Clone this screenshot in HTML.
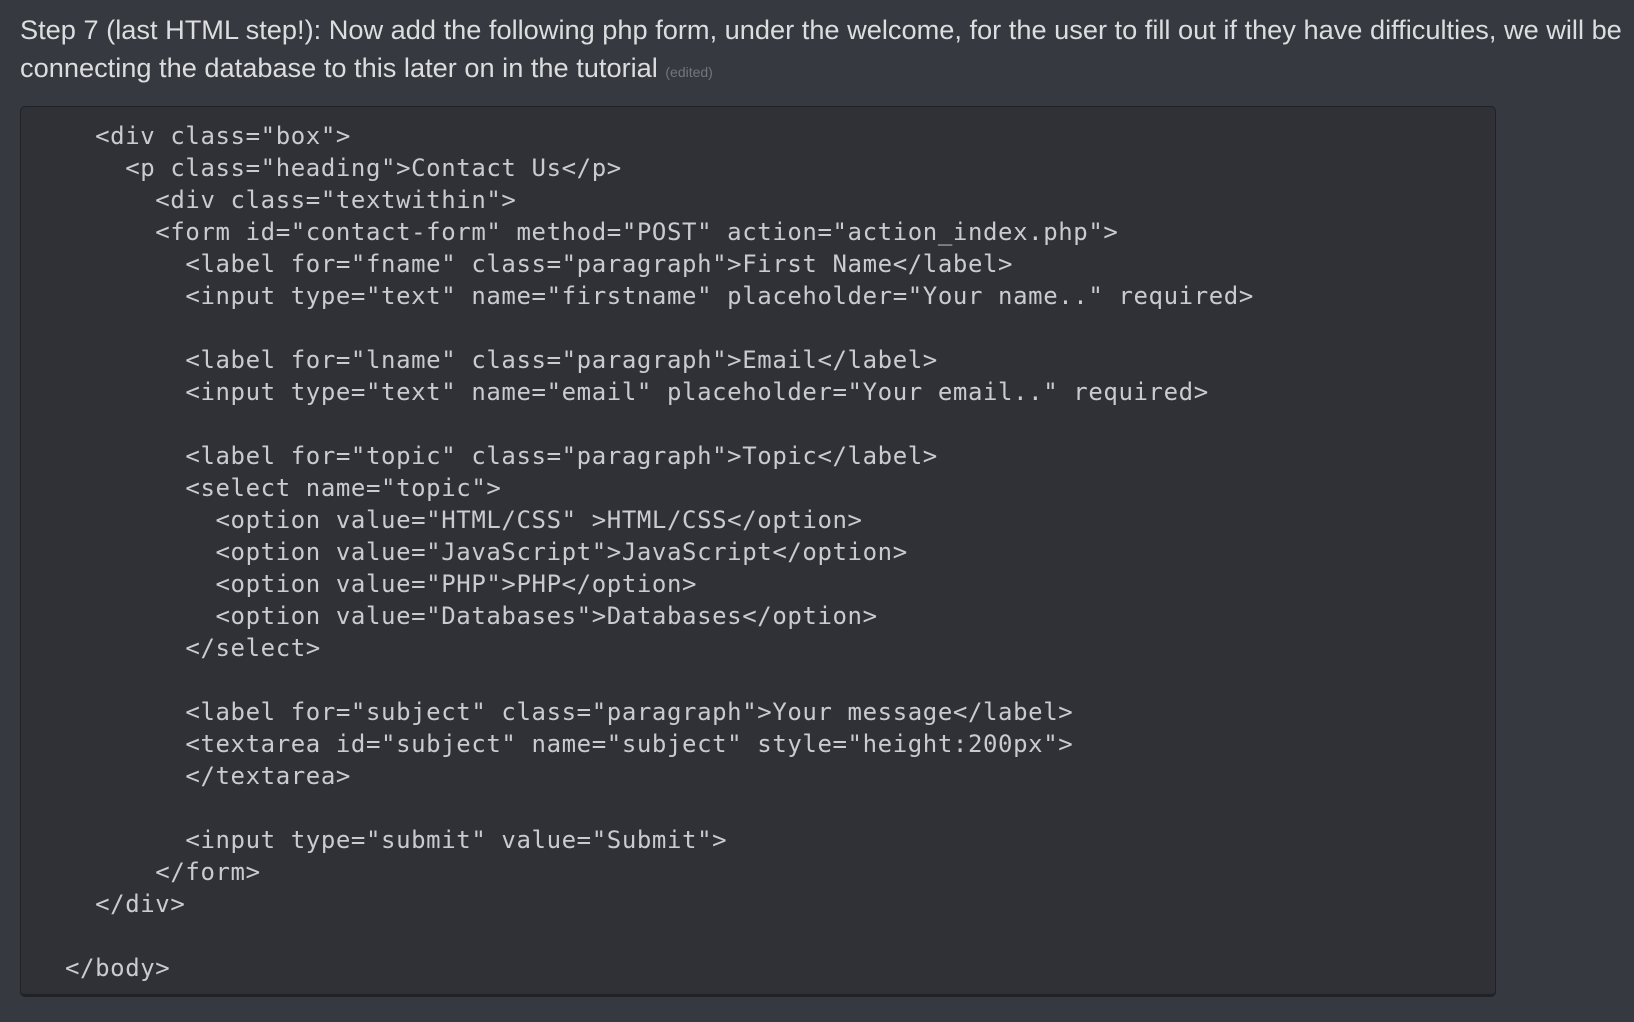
<!DOCTYPE html>
<html><head><meta charset="utf-8"><style>
html,body{margin:0;padding:0;background:#36393f;width:1634px;height:1022px;overflow:hidden}
.t{position:absolute;left:20px;color:#dcddde;font-family:"Liberation Sans",sans-serif;font-size:27.2px;white-space:nowrap}
.e{font-size:14px;color:#72767d}
.box{position:absolute;left:20px;top:106px;width:1476px;height:891px;background:#2f3136;border:1px solid #202225;border-bottom-width:3px;border-radius:5px;box-sizing:border-box}
pre{position:absolute;left:65px;top:120px;margin:0;font-family:"DejaVu Sans Mono","Liberation Mono",monospace;font-size:24px;line-height:32.02px;color:#c9cbce;letter-spacing:0.6px}
</style></head><body>
<div class="t" style="top:14px">Step 7 (last HTML step!): Now add the following php form, under the welcome, for the user to fill out if they have difficulties, we will be</div>
<div class="t" style="top:52px">connecting the database to this later on in the tutorial <span class="e">(edited)</span></div>
<div class="box"></div>
<pre>  &lt;div class="box"&gt;
    &lt;p class="heading"&gt;Contact Us&lt;/p&gt;
      &lt;div class="textwithin"&gt;
      &lt;form id="contact-form" method="POST" action="action_index.php"&gt;
        &lt;label for="fname" class="paragraph"&gt;First Name&lt;/label&gt;
        &lt;input type="text" name="firstname" placeholder="Your name.." required&gt;

        &lt;label for="lname" class="paragraph"&gt;Email&lt;/label&gt;
        &lt;input type="text" name="email" placeholder="Your email.." required&gt;

        &lt;label for="topic" class="paragraph"&gt;Topic&lt;/label&gt;
        &lt;select name="topic"&gt;
          &lt;option value="HTML/CSS" &gt;HTML/CSS&lt;/option&gt;
          &lt;option value="JavaScript"&gt;JavaScript&lt;/option&gt;
          &lt;option value="PHP"&gt;PHP&lt;/option&gt;
          &lt;option value="Databases"&gt;Databases&lt;/option&gt;
        &lt;/select&gt;

        &lt;label for="subject" class="paragraph"&gt;Your message&lt;/label&gt;
        &lt;textarea id="subject" name="subject" style="height:200px"&gt;
        &lt;/textarea&gt;

        &lt;input type="submit" value="Submit"&gt;
      &lt;/form&gt;
  &lt;/div&gt;

&lt;/body&gt;</pre>
</body></html>
